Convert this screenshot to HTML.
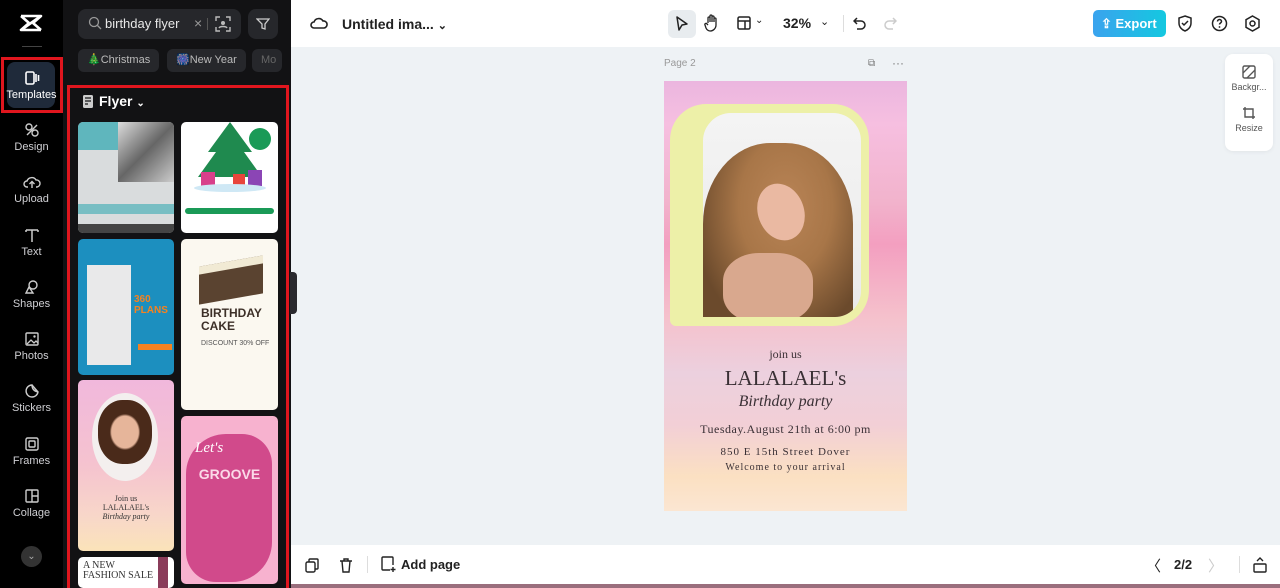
<!DOCTYPE html>
<html><head><meta charset="utf-8"><style>
*{margin:0;padding:0;box-sizing:border-box}
body{width:1280px;height:588px;overflow:hidden;font-family:"Liberation Sans",sans-serif;background:#eef2f5;position:relative}
.abs{position:absolute}
.rail{left:0;top:0;width:63px;height:588px;background:#000}
.ri{position:absolute;left:0;width:63px;text-align:center;color:#cfcfd3;font-size:11px}
.ri svg{display:block;margin:0 auto 3px}
.panel{left:63px;top:0;width:228px;height:588px;background:#121214}
.chip{position:absolute;top:49px;height:23px;background:#26272b;border-radius:6px;color:#bbb;font-size:11px;line-height:23px;padding:0 9px}
.th{position:absolute;border-radius:5px;overflow:hidden}
.top{left:291px;top:0;width:989px;height:47px;background:#fff}
.bot{left:291px;top:545px;width:989px;height:39px;background:#fff}
.serif{font-family:"Liberation Serif",serif;color:#3a3035;text-align:center;position:absolute;left:0;width:243px}
</style></head><body>
<div class="abs rail">
 <svg class="abs" style="left:19px;top:13px" width="24" height="20" viewBox="0 0 24 20"><path d="M2 3h20L2 17h20M2 3l8 7M22 3l-8 7M2 17l8-7M22 17l-8-7" stroke="#fff" stroke-width="2.6" fill="none" stroke-linejoin="round"/></svg>
 <div class="abs" style="left:22px;top:46px;width:20px;height:1px;background:#444"></div>
 <div class="abs" style="left:1px;top:57px;width:62px;height:56px;border:3px solid #e0161e"></div>
 <div class="abs" style="left:7px;top:62px;width:48px;height:46px;background:#1f2a3a;border-radius:8px"></div>
 <div class="ri" style="top:70px;color:#fff"><svg width="16" height="16" viewBox="0 0 16 16"><rect x="2" y="2" width="8" height="12" rx="1.5" stroke="#fff" stroke-width="1.6" fill="none"/><path d="M12 4v8M14.5 5v6" stroke="#fff" stroke-width="1.6"/></svg>Templates</div>
 <div class="ri" style="top:122px"><svg width="16" height="16" viewBox="0 0 16 16"><circle cx="5" cy="5" r="3" stroke="#ccc" stroke-width="1.4" fill="none"/><circle cx="11" cy="11" r="3" stroke="#ccc" stroke-width="1.4" fill="none"/><path d="M3 13L13 3" stroke="#ccc" stroke-width="1.4"/></svg>Design</div>
 <div class="ri" style="top:174px"><svg width="18" height="16" viewBox="0 0 18 16"><path d="M5 13H4a3 3 0 010-6 5 5 0 019-1 3.5 3.5 0 011 7h-1M9 14V8M6.5 10L9 7.5 11.5 10" stroke="#ccc" stroke-width="1.4" fill="none"/></svg>Upload</div>
 <div class="ri" style="top:227px"><svg width="16" height="16" viewBox="0 0 16 16"><path d="M2 3h12M8 3v12M2 3v2M14 3v2" stroke="#ccc" stroke-width="1.5" fill="none"/></svg>Text</div>
 <div class="ri" style="top:279px"><svg width="16" height="16" viewBox="0 0 16 16"><circle cx="9" cy="6" r="4" stroke="#ccc" stroke-width="1.4" fill="none"/><path d="M5 8l-3 6h7z" stroke="#ccc" stroke-width="1.4" fill="none"/></svg>Shapes</div>
 <div class="ri" style="top:331px"><svg width="16" height="16" viewBox="0 0 16 16"><rect x="2" y="2" width="12" height="12" rx="1" stroke="#ccc" stroke-width="1.4" fill="none"/><path d="M3 13l4-4 3 3 2-2 2 2" stroke="#ccc" stroke-width="1.3" fill="none"/><circle cx="10.5" cy="5.5" r="1.2" fill="#ccc"/></svg>Photos</div>
 <div class="ri" style="top:383px"><svg width="16" height="16" viewBox="0 0 16 16"><path d="M14 9A6 6 0 118 2c0 3 1 6 6 7zM8 2l6 7" stroke="#ccc" stroke-width="1.4" fill="none"/></svg>Stickers</div>
 <div class="ri" style="top:436px"><svg width="16" height="16" viewBox="0 0 16 16"><rect x="2" y="2" width="12" height="12" rx="1.5" stroke="#ccc" stroke-width="1.4" fill="none"/><rect x="5" y="5" width="6" height="6" rx="1" stroke="#ccc" stroke-width="1.4" fill="none"/></svg>Frames</div>
 <div class="ri" style="top:488px"><svg width="16" height="16" viewBox="0 0 16 16"><rect x="2" y="2" width="12" height="12" rx="1" stroke="#ccc" stroke-width="1.4" fill="none"/><path d="M8 2v12M8 8h6" stroke="#ccc" stroke-width="1.4"/></svg>Collage</div>
 <div class="abs" style="left:21px;top:546px;width:21px;height:21px;border-radius:50%;background:#333;color:#aaa;font-size:10px;text-align:center;line-height:21px">⌄</div>
</div>
<div class="abs panel">
 <div class="abs" style="left:15px;top:9px;width:163px;height:30px;background:#26272b;border-radius:8px"></div>
 <svg class="abs" style="left:25px;top:16px" width="14" height="14" viewBox="0 0 14 14"><circle cx="6" cy="6" r="4.5" stroke="#999" stroke-width="1.3" fill="none"/><path d="M9.5 9.5L13 13" stroke="#999" stroke-width="1.3"/></svg>
 <div class="abs" style="left:42px;top:16px;color:#e8e8e8;font-size:13px">birthday flyer</div>
 <div class="abs" style="left:131px;top:15px;color:#999;font-size:14px">×</div>
 <div class="abs" style="left:144px;top:18px;width:1px;height:12px;background:#555"></div>
 <svg class="abs" style="left:152px;top:16px" width="16" height="16" viewBox="0 0 16 16"><path d="M1 5V1h4M11 1h4v4M15 11v4h-4M5 15H1v-4" stroke="#bbb" stroke-width="1.4" fill="none"/><circle cx="8" cy="7" r="2" fill="#bbb"/><path d="M4 12c1-2 7-2 8 0" stroke="#bbb" stroke-width="1.4" fill="none"/></svg>
 <div class="abs" style="left:185px;top:9px;width:30px;height:30px;background:#26272b;border-radius:8px"></div>
 <svg class="abs" style="left:193px;top:17px" width="14" height="14" viewBox="0 0 14 14"><path d="M1 2h12L9 7v5l-3-1V7z" stroke="#ccc" stroke-width="1.3" fill="none"/></svg>
 <div class="chip" style="left:15px">🎄Christmas</div>
 <div class="chip" style="left:104px">🎆New Year</div>
 <div class="chip" style="left:189px;width:30px;color:#666">Mo</div>
 <div class="abs" style="left:4px;top:85px;width:222px;height:503px;border:3px solid #e0161e;border-bottom:none"></div>
 <svg class="abs" style="left:20px;top:95px" width="11" height="13" viewBox="0 0 11 13"><rect x="0" y="0" width="10" height="13" rx="1.5" fill="#ccc"/><path d="M2 3h6M2 6h6M2 9h3" stroke="#121214" stroke-width="1.2"/></svg>
 <div class="abs" style="left:36px;top:93px;color:#fff;font-size:14px;font-weight:bold">Flyer <span style="font-size:10px">⌄</span></div>
 <div class="th" style="left:15px;top:122px;width:96px;height:111px;background:#d9dcdd">
  <div class="abs" style="left:0;top:0;width:58px;height:28px;background:#5fb6bd"></div>
  <div class="abs" style="left:40px;top:0;width:56px;height:60px;background:linear-gradient(135deg,#ddd,#666 50%,#ccc)"></div>
  <div class="abs" style="left:0;top:82px;width:96px;height:10px;background:#5fb6bd;opacity:.8"></div>
  <div class="abs" style="left:0;top:102px;width:96px;height:9px;background:#444"></div>
 </div>
 <div class="th" style="left:118px;top:122px;width:97px;height:111px;background:#fff">
  <svg class="abs" style="left:12px;top:0" width="74" height="70" viewBox="0 0 74 70"><path d="M37 0L15 30h8L5 55h64L51 30h8z" fill="#1f8a4f"/><rect x="8" y="50" width="14" height="14" fill="#d8408b"/><rect x="55" y="48" width="14" height="16" fill="#8b45b5"/><rect x="40" y="52" width="12" height="12" fill="#e8453c"/><ellipse cx="37" cy="66" rx="36" ry="4" fill="#cfe8f5"/></svg>
  <div class="abs" style="left:68px;top:6px;width:22px;height:22px;border-radius:50%;background:#1a9a57"></div>
  <div class="abs" style="left:4px;top:86px;width:89px;height:6px;background:#1a9a57;border-radius:3px"></div>
 </div>
 <div class="th" style="left:15px;top:239px;width:96px;height:136px;background:#1c8fbf">
  <div class="abs" style="left:9px;top:26px;width:44px;height:100px;background:#e9e9ea"></div>
  <div class="abs" style="left:56px;top:55px;color:#f58220;font-size:10px;font-weight:bold">360<br>PLANS</div>
  <div class="abs" style="left:60px;top:105px;width:34px;height:6px;background:#f58220"></div>
 </div>
 <div class="th" style="left:118px;top:239px;width:97px;height:171px;background:#fbf8f0">
  <div class="abs" style="left:18px;top:22px;width:64px;height:38px;background:#5a4330;transform:skewY(-10deg);border-top:8px solid #f1ead4"></div>
  <div class="abs" style="left:20px;top:68px;color:#3d3028;font-size:12px;font-weight:bold;line-height:13px">BIRTHDAY<br>CAKE</div>
  <div class="abs" style="left:20px;top:101px;color:#555;font-size:7px">DISCOUNT 30% OFF</div>
 </div>
 <div class="th" style="left:15px;top:380px;width:96px;height:171px;background:linear-gradient(#f1b8dc,#f5c3cf 50%,#f8d7c9 80%,#fbe3b9)">
  <div class="abs" style="left:14px;top:13px;width:66px;height:88px;border-radius:50%;background:#f3efee"></div>
  <div class="abs" style="left:20px;top:20px;width:54px;height:64px;border-radius:45%;background:radial-gradient(#e6b59a 35%,#4a2a1a 40%)"></div>
  <div class="abs" style="left:0;top:114px;width:96px;text-align:center;font-family:'Liberation Serif',serif;font-size:8px;color:#333;line-height:9px">Join us<br>LALALAEL's<br><i>Birthday party</i></div>
 </div>
 <div class="th" style="left:118px;top:416px;width:97px;height:168px;background:#f7b2cf">
  <div class="abs" style="left:5px;top:18px;width:86px;height:148px;border-radius:40px 30px 40px 30px;background:#d14a8b"></div>
  <div class="abs" style="left:0;top:50px;width:97px;text-align:center;color:#fbd9e8;font-size:14px;font-weight:bold">GROOVE</div>
  <div class="abs" style="left:14px;top:24px;color:#fff;font-size:15px;font-style:italic;font-family:'Liberation Serif',serif">Let's</div>
 </div>
 <div class="th" style="left:15px;top:557px;width:96px;height:31px;background:#fff">
  <div class="abs" style="left:5px;top:4px;font-size:10px;color:#333;font-family:'Liberation Serif',serif;line-height:10px">A NEW<br>FASHION SALE</div>
  <div class="abs" style="left:80px;top:0;width:10px;height:31px;background:#8a3c5a"></div>
 </div>
</div>
<div class="abs" style="left:290px;top:272px;width:7px;height:42px;background:#2a2a2e;border-radius:0 4px 4px 0"></div>
<div class="abs top">
 <svg class="abs" style="left:19px;top:15px" width="18" height="16" viewBox="0 0 18 16"><path d="M5 13H4a3 3 0 010-6 5 5 0 019-1 3.5 3.5 0 011 7z" stroke="#222" stroke-width="1.6" fill="none"/></svg>
 <div class="abs" style="left:51px;top:16px;font-size:14px;font-weight:bold;color:#222">Untitled ima... <span style="font-size:11px">⌄</span></div>
 <div class="abs" style="left:377px;top:10px;width:28px;height:28px;background:#e8ecef;border-radius:6px"></div>
 <svg class="abs" style="left:384px;top:16px" width="14" height="16" viewBox="0 0 14 16"><path d="M2 1l10 7-5 1-3 5z" stroke="#222" stroke-width="1.5" fill="none" stroke-linejoin="round"/></svg>
 <svg class="abs" style="left:413px;top:14px" width="16" height="18" viewBox="0 0 16 18"><path d="M4 9V4a1 1 0 012 0v4M6 8V2a1 1 0 012 0v6M8 8V3a1 1 0 012 0v5M10 8V5a1 1 0 012 0v6a6 6 0 01-6 6 5 5 0 01-4-3L1 11a1 1 0 012-1l1 1" stroke="#222" stroke-width="1.3" fill="none"/></svg>
 <svg class="abs" style="left:446px;top:16px" width="14" height="14" viewBox="0 0 14 14"><rect x="1" y="1" width="12" height="12" rx="1.5" stroke="#222" stroke-width="1.5" fill="none"/><path d="M1 5h12M8 5v8" stroke="#222" stroke-width="1.5"/></svg>
 <div class="abs" style="left:464px;top:15px;font-size:10px;color:#222">⌄</div>
 <div class="abs" style="left:492px;top:15px;font-size:14px;font-weight:bold;color:#222">32%</div>
 <div class="abs" style="left:529px;top:15px;font-size:11px;color:#222">⌄</div>
 <div class="abs" style="left:552px;top:15px;width:1px;height:17px;background:#ddd"></div>
 <svg class="abs" style="left:562px;top:16px" width="14" height="14" viewBox="0 0 14 14"><path d="M4 2L1 5l3 3M1 5h7a4 4 0 010 8H4" stroke="#222" stroke-width="1.5" fill="none"/></svg>
 <svg class="abs" style="left:592px;top:16px" width="14" height="14" viewBox="0 0 14 14"><path d="M10 2l3 3-3 3M13 5H6a4 4 0 000 8h4" stroke="#ccc" stroke-width="1.5" fill="none"/></svg>
 <div class="abs" style="left:802px;top:10px;width:73px;height:27px;border-radius:5px;background:linear-gradient(90deg,#3aa3ee,#14c8e0);color:#fff;font-size:13px;font-weight:bold;line-height:27px;padding-left:8px">⇪ Export</div>
 <svg class="abs" style="left:886px;top:15px" width="16" height="17" viewBox="0 0 16 17"><path d="M8 1l6 2v5c0 4-3 7-6 8-3-1-6-4-6-8V3z" stroke="#222" stroke-width="1.5" fill="none"/><path d="M5 8l2 2 4-4" stroke="#222" stroke-width="1.5" fill="none"/></svg>
 <svg class="abs" style="left:920px;top:15px" width="17" height="17" viewBox="0 0 17 17"><circle cx="8.5" cy="8.5" r="7" stroke="#222" stroke-width="1.5" fill="none"/><path d="M6.5 6.5a2 2 0 114 0c0 1.5-2 1.5-2 3" stroke="#222" stroke-width="1.5" fill="none"/><circle cx="8.5" cy="12" r=".9" fill="#222"/></svg>
 <svg class="abs" style="left:953px;top:15px" width="17" height="17" viewBox="0 0 17 17"><path d="M8.5 1l6.5 3.7v7.6L8.5 16 2 12.3V4.7z" stroke="#222" stroke-width="1.5" fill="none"/><circle cx="8.5" cy="8.5" r="2.5" stroke="#222" stroke-width="1.5" fill="none"/></svg>
</div>
<div class="abs" style="left:1225px;top:54px;width:48px;height:97px;background:#fff;border-radius:8px;box-shadow:0 1px 4px rgba(0,0,0,.06);text-align:center;font-size:9px;color:#555">
 <svg style="display:block;margin:11px auto 3px" width="14" height="14" viewBox="0 0 14 14"><rect x="1" y="1" width="12" height="12" rx="1.5" stroke="#555" stroke-width="1.4" fill="none"/><path d="M1 8l7-7M5 13l8-8" stroke="#555" stroke-width="1.3"/></svg>Backgr...
 <svg style="display:block;margin:14px auto 3px" width="14" height="14" viewBox="0 0 14 14"><path d="M3 1v10h10M1 3h10v6M11 9v4" stroke="#555" stroke-width="1.4" fill="none"/></svg>Resize
</div>
<div class="abs" style="left:664px;top:58px;font-size:10px;color:#999">Page 2</div>
<div class="abs" style="left:868px;top:58px;font-size:10px;color:#777">⧉</div>
<div class="abs" style="left:892px;top:56px;font-size:12px;color:#777">···</div>
<div class="abs" style="left:664px;top:81px;width:243px;height:430px;overflow:hidden;background:linear-gradient(180deg,#ebb6df 0%,#f6bfe0 10%,#f2b3cc 28%,#f39fc0 38%,#f5c1cc 55%,#ecd0de 68%,#f2cfd6 80%,#fbe0c2 92%,#fbe6d2 100%)">
 <div class="abs" style="left:6px;top:23px;width:199px;height:222px;background:#edf0a8;border-radius:36px 36px 36px 6px"></div>
 <div class="abs" style="left:39px;top:32px;width:158px;height:204px;border-radius:28px 28px 26px 0;overflow:hidden;background:linear-gradient(#f4f4f4,#eaeaea)">
  <div class="abs" style="left:0;top:30px;width:150px;height:180px;border-radius:45% 45% 0 0;background:radial-gradient(ellipse at 55% 35%,#b98456 0%,#a87648 40%,#6b4a2c 80%)"></div>
  <div class="abs" style="left:55px;top:70px;width:46px;height:58px;border-radius:50%;background:#eab9a2;transform:rotate(-20deg)"></div>
  <div class="abs" style="left:20px;top:140px;width:90px;height:70px;border-radius:40%;background:#d9a88e"></div>
 </div>
 <div class="serif" style="top:266px;font-size:12px">join us</div>
 <div class="serif" style="top:285px;font-size:21px">LALALAEL's</div>
 <div class="serif" style="top:312px;font-size:16px;font-style:italic">Birthday party</div>
 <div class="serif" style="top:341px;font-size:12px;letter-spacing:.5px">Tuesday.August 21th at 6:00 pm</div>
 <div class="serif" style="top:365px;font-size:11px;letter-spacing:1px">850 E 15th Street Dover</div>
 <div class="serif" style="top:381px;font-size:10px;letter-spacing:1px">Welcome to your arrival</div>
</div>
<div class="abs bot">
 <svg class="abs" style="left:14px;top:13px" width="14" height="15" viewBox="0 0 14 15"><rect x="1" y="4" width="9" height="10" rx="1.5" stroke="#222" stroke-width="1.4" fill="none"/><path d="M4 4V2a1 1 0 011-1h7a1 1 0 011 1v8a1 1 0 01-1 1h-2" stroke="#222" stroke-width="1.4" fill="none"/></svg>
 <svg class="abs" style="left:48px;top:13px" width="14" height="15" viewBox="0 0 14 15"><path d="M1 3h12M5 3V1h4v2M3 3l1 11h6l1-11" stroke="#222" stroke-width="1.4" fill="none"/></svg>
 <div class="abs" style="left:76px;top:11px;width:1px;height:17px;background:#ddd"></div>
 <svg class="abs" style="left:90px;top:11px" width="15" height="17" viewBox="0 0 15 17"><path d="M9 14H2a1 1 0 01-1-1V2a1 1 0 011-1h9a1 1 0 011 1v7M12 11v5M9.5 13.5h5" stroke="#222" stroke-width="1.4" fill="none"/></svg>
 <div class="abs" style="left:110px;top:12px;font-size:13px;font-weight:bold;color:#222">Add page</div>
 <div class="abs" style="left:855px;top:10px;font-size:15px;color:#222">〈</div>
 <div class="abs" style="left:883px;top:12px;font-size:13px;font-weight:bold;color:#222">2/2</div>
 <div class="abs" style="left:917px;top:10px;font-size:15px;color:#ccc">〉</div>
 <div class="abs" style="left:948px;top:11px;width:1px;height:17px;background:#ddd"></div>
 <svg class="abs" style="left:962px;top:12px" width="14" height="16" viewBox="0 0 14 16"><rect x="1" y="7" width="12" height="8" rx="1" stroke="#222" stroke-width="1.4" fill="none"/><path d="M4 4l3-3 3 3" stroke="#222" stroke-width="1.4" fill="none"/></svg>
</div>
<div class="abs" style="left:291px;top:584px;width:989px;height:4px;background:#9a6e7d"></div>
</body></html>
